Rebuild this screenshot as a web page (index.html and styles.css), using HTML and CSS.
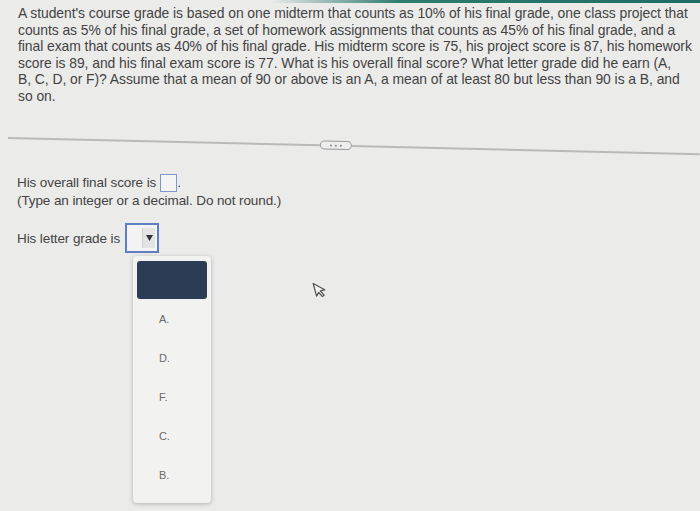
FILE: index.html
```html
<!DOCTYPE html>
<html>
<head>
<meta charset="utf-8">
<link rel="stylesheet" href="styles.css">
</head>
<body>
<div class="topbar"></div>
<div class="page">
  <p class="question">A student's course grade is based on one midterm that counts as 10% of his final grade, one class project that<br>counts as 5% of his final grade, a set of homework assignments that counts as 45% of his final grade, and a<br>final exam that counts as 40% of his final grade. His midterm score is 75, his project score is 87, his homework<br>score is 89, and his final exam score is 77. What is his overall final score? What letter grade did he earn (A,<br>B, C, D, or F)? Assume that a mean of 90 or above is an A, a mean of at least 80 but less than 90 is a B, and<br>so on.</p>
  <div class="divider"><span class="line"></span><span class="pill"><i></i><i></i><i></i></span><span class="line"></span></div>
  <div class="answers">
    <div class="row">His overall final score is <span class="inbox"></span>.</div>
    <div class="hint">(Type an integer or a decimal. Do not round.)</div>
    <div class="row grade">His letter grade is <span class="select"><span class="sel-val"></span><span class="sel-arrow"><svg width="7" height="6" viewBox="0 0 7 6"><path d="M0 0h7L3.5 6z" fill="#333"/></svg></span></span></div>
    <div class="menuwrap">
      <div class="menu">
        <div class="opt selected"></div>
        <div class="opt">A.</div>
        <div class="opt">D.</div>
        <div class="opt">F.</div>
        <div class="opt">C.</div>
        <div class="opt">B.</div>
      </div>
      <svg class="cursor" width="14" height="17" viewBox="0 0 14 17"><path d="M2 1 L2 14 L5 11 L7.5 16 L9.5 15 L7 10 L11.5 10 Z" fill="#f4f4f4" stroke="#555" stroke-width="1.3" stroke-linejoin="round"/></svg>
    </div>
  </div>
</div>
</body>
</html>
```
FILE: styles.css
```css
html, body {
  margin: 0;
  padding: 0;
}
body {
  width: 700px;
  height: 511px;
  overflow: hidden;
  background: #ebebea;
  font-family: "Liberation Sans", Arial, sans-serif;
  color: #434343;
  position: relative;
}
.topbar {
  position: absolute;
  top: 0;
  left: 270px;
  right: 0;
  height: 3px;
  background: linear-gradient(to right, rgba(40,120,110,0), #2e7c70 30%, #1f6c62);
}
.page {
  padding: 5px 0 0 18px;
}
.question {
  margin: 0;
  font-size: 13.9px;
  line-height: 16.6px;
  letter-spacing: -0.05px;
  white-space: nowrap;
}
.divider {
  display: flex;
  align-items: center;
  margin: 28px 0 0 -10px;
  transform: rotate(1.35deg);
  transform-origin: left center;
}
.divider .line {
  height: 2px;
  background: #b9b9b9;
  flex: 1;
}
.divider .line:first-child {
  flex: 0 0 312px;
}
.pill {
  display: flex;
  gap: 3px;
  align-items: center;
  justify-content: center;
  width: 30px;
  height: 7px;
  border: 1.5px solid #9a9a9a;
  border-radius: 5px;
  background: #ededed;
}
.pill i {
  width: 2px;
  height: 2px;
  background: #8a8a8a;
  border-radius: 1px;
}
.answers {
  padding-top: 31px;
  margin-left: -1px;
  font-size: 13.5px;
  letter-spacing: -0.1px;
}
.row {
  display: flex;
  align-items: center;
  height: 20px;
}
.inbox {
  display: inline-block;
  width: 15px;
  height: 16px;
  border: 1.5px solid #7f98c9;
  background: #f4f4f4;
  margin-left: 4px;
}
.hint {
  margin-top: 0;
  line-height: 16px;
}
.grade {
  margin-top: 14px;
  height: 31px;
}
.select {
  display: flex;
  width: 30px;
  height: 26px;
  border: 2px solid #5f7ec4;
  margin-left: 5px;
  background: #f3f3f3;
}
.sel-val {
  flex: 1;
}
.sel-arrow {
  width: 12px;
  display: flex;
  align-items: center;
  justify-content: center;
  border-left: 1px solid #d0d0d0;
  background: #e4e4e4;
  margin: 3px 2px 3px 0;
}
.menuwrap {
  position: relative;
  margin-top: 2px;
  margin-left: 116px;
}
.menu {
  width: 70px;
  padding: 5px 4px 8px 4px;
  background: #f2f2f1;
  border-radius: 4px;
  box-shadow: 0 1px 4px rgba(0,0,0,0.25);
  font-size: 11px;
  color: #6a6a6a;
}
.opt {
  height: 39px;
  line-height: 39px;
  padding-left: 22px;
}
.opt.selected {
  height: 38px;
  background: #2b3c54;
  border-radius: 3px;
  margin-bottom: 1px;
}
.cursor {
  position: absolute;
  left: 180px;
  top: 25px;
  transform: rotate(-15deg);
}
```
